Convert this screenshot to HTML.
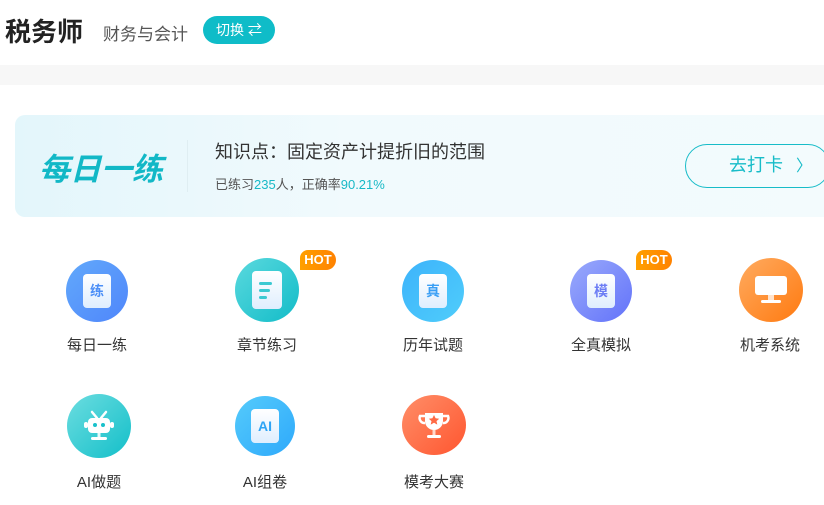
<!DOCTYPE html>
<html><head><meta charset="utf-8"><style>
*{margin:0;padding:0;box-sizing:border-box}
body{width:824px;height:505px;overflow:hidden;background:#fff;font-family:"Liberation Sans","Noto Sans CJK SC",sans-serif;position:relative;color:#333}
.abs{position:absolute}
.title{left:5px;top:12px;font-size:26px;font-weight:bold;color:#222}
.sub{left:103px;top:20px;font-size:17px;color:#555}
.sw{left:203px;top:16px;width:72px;height:28px;border-radius:14px;background:#0fbcc8;color:#fff;font-size:14px;line-height:28px;padding-left:13px}
.band{left:0;top:65px;width:824px;height:20px;background:#f7f7f7}
.banner{left:15px;top:115px;width:830px;height:102px;border-radius:10px;background:linear-gradient(90deg,#e3f6fb,#f1fafd 40%,#f3fbfd)}
.mr{left:39px;top:144px;font-size:31px;font-weight:bold;font-style:italic;color:#12b8c6}
.div{left:187px;top:140px;width:1px;height:52px;background:#dfeef2}
.kp{left:215px;top:138px;font-size:18px;color:#333}
.st{left:215px;top:174px;font-size:13px;color:#555}
.st b{font-weight:normal;color:#18b9c6}
.btn{left:685px;top:144px;width:145px;height:44px;border:1.5px solid #17bcc8;border-radius:22px;color:#17bcc8;font-size:18px;line-height:41px;padding-left:43px}
.c{width:62px;height:62px;border-radius:50%;display:flex;align-items:center;justify-content:center}
.lb{font-size:15px;color:#333;width:120px;text-align:center}
.hot{width:36px;height:20px;border-radius:8px 10px 10px 0;background:linear-gradient(90deg,#ffa000,#ff8200);color:#fff;font-size:13px;font-weight:bold;line-height:20px;text-align:center}
.doc{width:28px;height:34px;background:linear-gradient(180deg,#fff,#dfeefe);border-radius:4px;color:#4c8ff7;font-weight:bold;font-size:14px;display:flex;align-items:center;justify-content:center}
</style></head><body>
<div class="abs title">税务师</div>
<div class="abs sub">财务与会计</div>
<div class="abs sw">切换 ⇄</div>
<div class="abs band"></div>
<div class="abs banner"></div>
<div class="abs mr">每日一练</div>
<div class="abs div"></div>
<div class="abs kp">知识点：固定资产计提折旧的范围</div>
<div class="abs st">已练习<b>235</b>人，正确率<b>90.21%</b></div>
<div class="abs btn">去打卡 <span style="font-size:16px;margin-left:8px">〉</span></div>

<div class="abs c" style="left:66px;top:260px;background:linear-gradient(135deg,#62a9fb,#4f86fb)"><div class="doc">练</div></div>
<div class="abs lb" style="left:37px;top:334px">每日一练</div>
<div class="abs c" style="left:235px;top:258px;width:64px;height:64px;background:linear-gradient(135deg,#5ad9de,#12bcc8)"><div class="doc" style="width:30px;height:38px;flex-direction:column;align-items:flex-start;padding-left:7px;gap:4px"><i style="width:13px;height:3px;background:#3cc9d2;border-radius:2px"></i><i style="width:11px;height:3px;background:#3cc9d2;border-radius:2px"></i><i style="width:8px;height:3px;background:#3cc9d2;border-radius:2px"></i></div></div>
<div class="abs lb" style="left:207px;top:334px">章节练习</div>
<div class="abs hot" style="left:300px;top:250px">HOT</div>
<div class="abs c" style="left:402px;top:260px;background:linear-gradient(135deg,#3db3fb,#4fcdfb)"><div class="doc" style="color:#3a9ff5">真</div></div>
<div class="abs lb" style="left:373px;top:334px">历年试题</div>
<div class="abs c" style="left:570px;top:260px;background:linear-gradient(135deg,#9aaafb,#6272fa)"><div class="doc" style="color:#6d7ef5">模</div></div>
<div class="abs lb" style="left:541px;top:334px">全真模拟</div>
<div class="abs hot" style="left:636px;top:250px">HOT</div>
<div class="abs c" style="left:739px;top:258px;width:64px;height:64px;background:linear-gradient(135deg,#ffab60,#ff7a10)"><svg width="34" height="32" viewBox="0 0 34 32"><rect x="1" y="2" width="32" height="19" rx="3" fill="#fff"/><rect x="14" y="21" width="6" height="5" fill="#ffe3cc"/><rect x="7" y="26" width="20" height="3" rx="1.5" fill="#fff"/></svg></div>
<div class="abs lb" style="left:710px;top:334px">机考系统</div>

<div class="abs c" style="left:67px;top:394px;width:64px;height:64px;background:linear-gradient(135deg,#6cdde0,#13bfc9)"><svg width="34" height="34" viewBox="0 0 34 34"><path d="M10 3l5 6M24 3l-5 6" stroke="#fff" stroke-width="2.5" stroke-linecap="round"/><rect x="6" y="9" width="22" height="15" rx="4" fill="#fff"/><rect x="2" y="13" width="4" height="6" rx="2" fill="#fff"/><rect x="28" y="13" width="4" height="6" rx="2" fill="#fff"/><circle cx="13" cy="16" r="2" fill="#19c1cb"/><circle cx="21" cy="16" r="2" fill="#19c1cb"/><rect x="15.5" y="24" width="3" height="4" fill="#e6fbfc"/><rect x="9" y="28" width="16" height="3" rx="1.5" fill="#fff"/></svg></div>
<div class="abs lb" style="left:39px;top:471px">AI做题</div>
<div class="abs c" style="left:235px;top:396px;width:60px;height:60px;background:linear-gradient(135deg,#55cbfb,#2ea9fb)"><div class="doc" style="color:#2ea4f5">AI</div></div>
<div class="abs lb" style="left:205px;top:471px">AI组卷</div>
<div class="abs c" style="left:402px;top:395px;width:64px;height:60px;background:linear-gradient(135deg,#ff8e68,#ff5630)"><svg width="34" height="32" viewBox="0 0 34 32"><path d="M8 4h18v8a9 9 0 0 1-18 0z" fill="#fff"/><path d="M8 7H3a5 5 0 0 0 5 7M26 7h5a5 5 0 0 1-5 7" stroke="#fff" stroke-width="2.5" fill="none"/><path d="M17 6l1.6 3.3 3.6.4-2.7 2.4.8 3.5L17 13.8 13.7 15.6l.8-3.5-2.7-2.4 3.6-.4z" fill="#ff6a45"/><rect x="15.5" y="21" width="3" height="5" fill="#ffd9cc"/><rect x="10" y="26" width="14" height="3" rx="1.5" fill="#fff"/></svg></div>
<div class="abs lb" style="left:374px;top:471px">模考大赛</div>
</body></html>
